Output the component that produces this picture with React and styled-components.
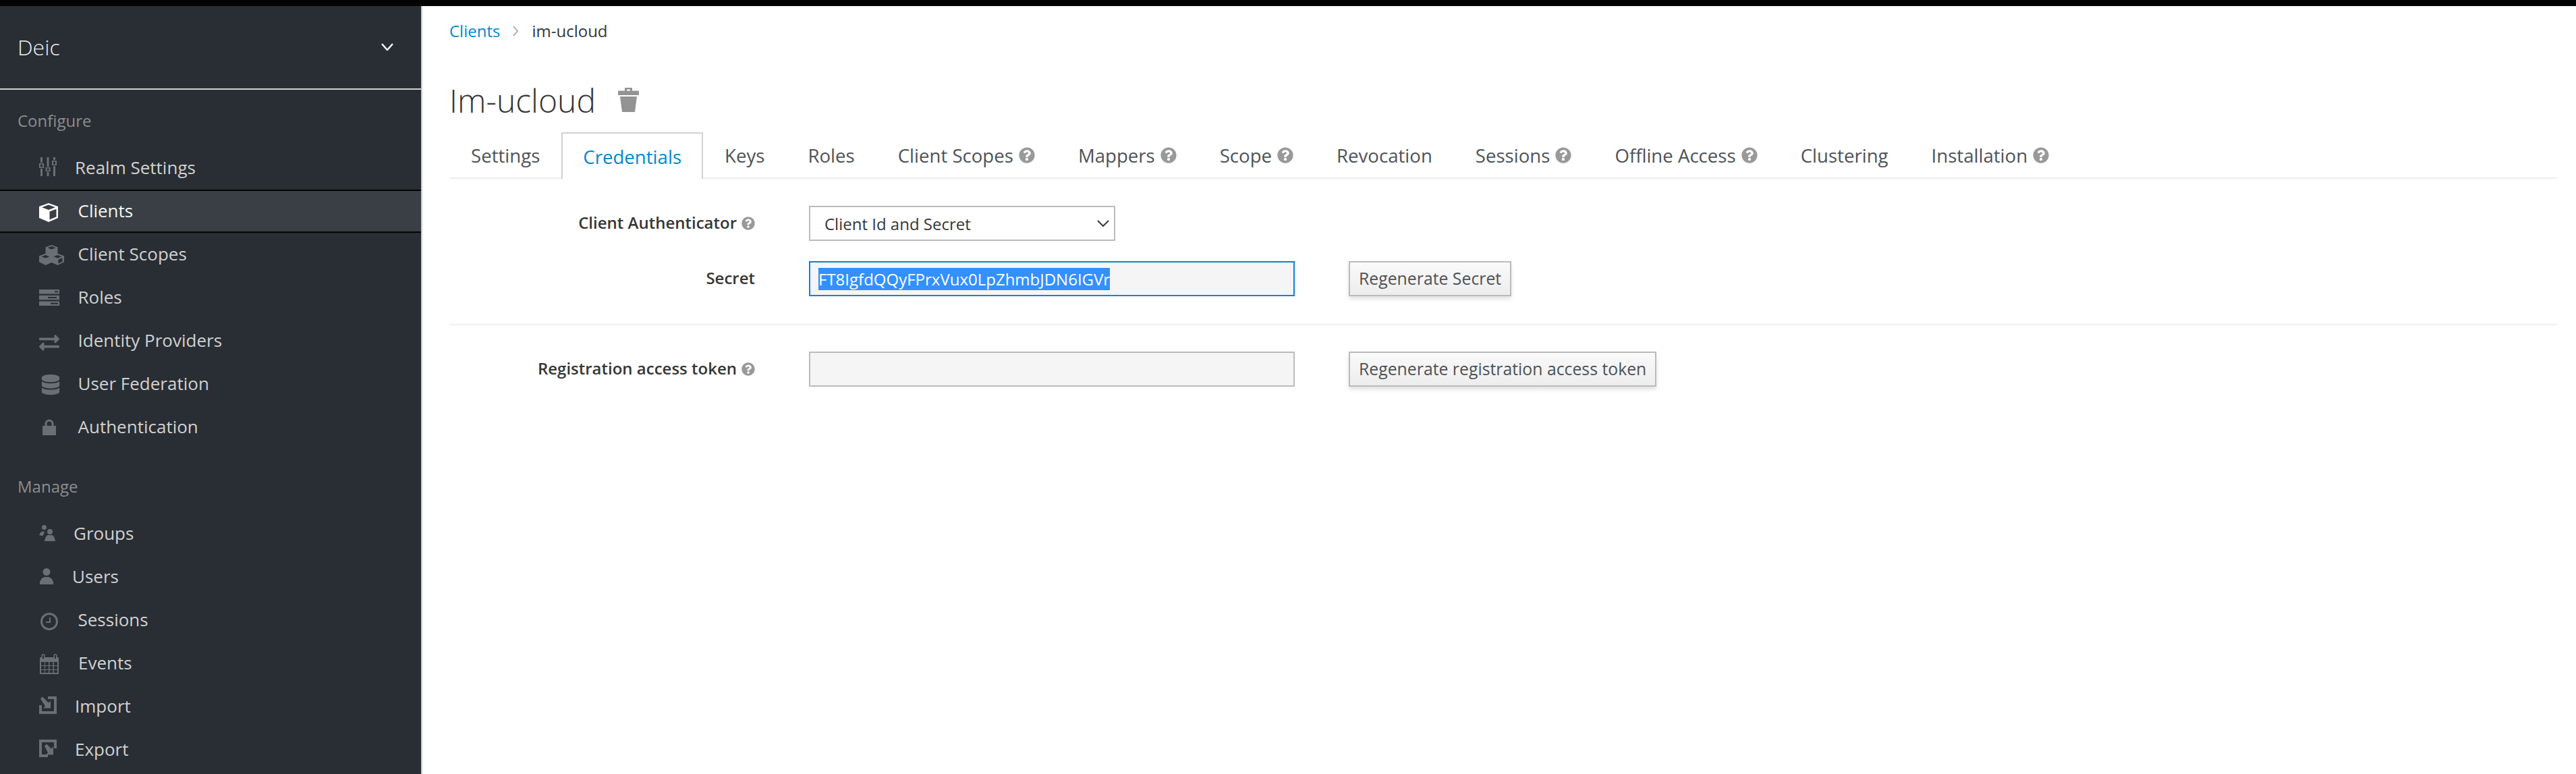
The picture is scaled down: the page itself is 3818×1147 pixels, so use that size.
import React from 'react';
import styled, { createGlobalStyle } from 'styled-components';
import { FaQuestionCircle, FaDatabase, FaExchangeAlt } from 'react-icons/fa';

const Global = createGlobalStyle`
  html, body { margin: 0; padding: 0; background: #fff; }
  body { font-family: "Open Sans", "Liberation Sans", sans-serif; overflow: hidden; }
  * { box-sizing: border-box; }
`;

const Page = styled.div`
  width: 3818px; height: 1147px; display: flex; flex-direction: column; overflow: hidden;
`;
const TopBar = styled.div`height: 9px; flex: none; background: #030303;`;
const Body = styled.div`flex: 1; display: flex; min-height: 0;`;
const Sidebar = styled.nav`
  width: 626px; flex: none; background: #292e34; border-right: 2px solid #c9cacb; color: #d1d1d1;
`;
const RealmHeader = styled.div`
  height: 124px; display: flex; align-items: center; justify-content: space-between;
  padding: 0 41px 2px 26px; border-bottom: 2px solid #d1d1d1; color: #f0f0f0;
  font-size: 32px; font-weight: 300;
`;
const SectionLabel = styled.div`
  height: ${p => p.$h}px; padding-top: ${p => p.$pt}px; padding-left: 26px;
  display: flex; align-items: center; font-size: 24px; color: #8b8d8f;
`;
const NavRow = styled.div`
  height: 64px; display: flex; align-items: center; padding: 0 0 3px 58px; font-size: 26px;
  color: ${p => (p.$active ? '#f5f5f5' : '#d1d1d1')};
  background: ${p => (p.$active ? '#393f44' : 'transparent')};
  ${p => p.$active && 'border-top: 2px solid #030303; border-bottom: 2px solid #030303;'}
`;
const IconSlot = styled.span`
  width: ${p => p.$w}px; flex: none; display: flex; align-items: center;
  padding-left: ${p => p.$pl || 0}px;
  margin-top: ${p => 2 * (p.$dy + 1.5)}px;
  color: ${p => (p.$active ? '#fff' : '#6a6e75')};
`;
const Main = styled.main`flex: 1; min-width: 0; padding: 0 28px 0 40px;`;
const Breadcrumb = styled.div`
  height: 74px; padding-bottom: 1px; display: flex; align-items: center; font-size: 24px; color: #363636;
`;
const Crumb = styled.a`color: #0088ce; text-decoration: none;`;
const CrumbSep = styled.span`
  display: flex; margin: 0 19px 0 19px; color: #9c9c9c;
`;
const TitleRow = styled.div`
  height: 113px; padding-top: 17px; display: flex; align-items: center; gap: 33px;
`;
const Title = styled.h1`margin: 0; font-size: 48px; font-weight: 300; color: #363636;`;
const TrashWrap = styled.span`display: flex; color: #939393;`;
const Tabs = styled.div`display: flex; height: 69px; border-bottom: 2px solid #ededed;`;
const Tab = styled.div`
  height: ${p => (p.$active ? '69px' : '67px')}; padding: 0 ${p => (p.$active ? 30 : 32)}px;
  display: flex; align-items: center; gap: 8px; font-size: 27.600px; background: #fff;
  color: ${p => (p.$active ? '#0088ce' : '#4d5258')};
  ${p => p.$active && 'border: 2px solid #d1d1d1; border-bottom: none;'}
`;
const Help = styled(FaQuestionCircle)`
  flex: none; color: #999; width: ${p => p.$s}px; height: ${p => p.$s}px;
  margin-top: ${p => p.$mt || 0}px;
`;
const Form = styled.div`padding-top: 40px;`;
const FormRow = styled.div`
  display: flex; align-items: center; height: 52px; margin-bottom: ${p => p.$mb}px;
`;
const Label = styled.label`
  width: 453px; flex: none; margin-right: 80px; padding-bottom: 3px; display: flex; justify-content: flex-end;
  align-items: center; gap: 7px; font-size: 24px; font-weight: 600; color: #363636;
`;
const Control = styled.div`
  height: 52px; display: flex; align-items: center; font-size: 24px; color: #363636;
  width: ${p => p.$w}px; flex: none;
  background: ${p => p.$bg}; border: 2px solid ${p => p.$border};
`;
const SelectBox = styled(Control)`
  justify-content: space-between; padding: 0 7px 0 21px;
`;
const InputBox = styled(Control)`padding-left: 12px;`;
const Selected = styled.span`background: #3390ff; color: #fff; line-height: 33px;`;
const Button = styled.button`
  height: 52px; padding: 0 13px 3px; margin-left: 80px; font: inherit; font-size: 24.800px; color: #4d5258;
  border: 2px solid #bbb; background: linear-gradient(#fafafa, #ededed);
  box-shadow: 0 4px 6px rgba(0,0,0,.12);
`;
const Divider = styled.hr`margin: 0 0 39px; border: 0; height: 2px; background: #f1f1f1;`;

const Svg = ({ w, h, children }) => (
  <svg width={w} height={h} viewBox={`0 0 ${w} ${h}`} fill="currentColor">{children}</svg>
);
const Sliders = () => (
  <Svg w={26} h={28}>
    <path d="M2 0h3v8h-3zM2 17h3v11h-3zM0 9h7v7H0zM11.500 0h3v14h-3zM11.500 22h3v6h-3zM9.500 15h7v6h-7zM21 0h3v4h-3zM21 13h3v15h-3zM19 5h7v7h-7z" fillRule="evenodd" />
    <path d="M2 10.500h3v4h-3zM11.500 16.500h3v3h-3zM21 6.500h3v4h-3z" fill="#292e34" />
  </Svg>
);
const Cube = () => (
  <Svg w={28} h={28}>
    <path fillRule="evenodd" d="M14 0l14 5v17l-14 6-14-6V5zM14 2.600L4 6.200l10 3.800 10-3.800zM15.500 12.600v12l10-4.300V8.800z" />
  </Svg>
);
const Cubes = () => (
  <Svg w={37} h={30}>
    <path fillRule="evenodd" d="M18.500 0l9 3.300v9.500l9.500 3.500v9l-9.500 4.700-9-4-9 4L0 25.300v-9l9.500-3.500V3.300zM18.500 2l-6 2.200 6 2.300 6-2.300zM9.500 15l-6 2.200 6 2.300 6-2.300zM27.500 15l-6 2.200 6 2.300 6-2.300zM28.500 21.500v6l6-3v-5.300z" />
  </Svg>
);
const Server = () => (
  <Svg w={30} h={24}>
    <path fillRule="evenodd" d="M0 0h30v6.500H0zM23 2.200v2h5v-2zM0 8.800h30v6.500H0zM13 11v2h13v-2zM0 17.500h30V24H0zM17 19.700v2h11v-2z" />
  </Svg>
);
const Lock = () => (
  <Svg w={20} h={24}>
    <path fillRule="evenodd" d="M3.500 10V7a6.500 6.500 0 0 1 13 0v3H19a1 1 0 0 1 1 1v12a1 1 0 0 1-1 1H1a1 1 0 0 1-1-1V11a1 1 0 0 1 1-1zM6.500 10h7V7a3.500 3.500 0 0 0-7 0z" />
  </Svg>
);
const People = () => (
  <Svg w={25} h={24}>
    <circle cx="7.500" cy="3.500" r="3.500" />
    <circle cx="16" cy="10" r="4" />
    <path d="M0 15l2-4 4-2 2 2-1 2-2 3-1 0zM8 24l1.500-6 3-3h7l3 3 1.500 6z" />
  </Svg>
);
const Person = () => (
  <Svg w={20} h={24}>
    <circle cx="10" cy="5.500" r="5.500" />
    <path d="M0 24v-4l3-5 4-2h6l4 2 3 5v4z" />
  </Svg>
);
const Clock = () => (
  <Svg w={26} h={26}>
    <path fillRule="evenodd" d="M13 0a13 13 0 1 1 0 26a13 13 0 0 1 0-26zM13 3a10 10 0 1 0 0 20a10 10 0 0 0 0-20z" />
    <path d="M13 7h2v8H8v-2h5z" />
  </Svg>
);
const Calendar = () => (
  <Svg w={28} h={30}>
    <path fillRule="evenodd" d="M5 0a2.500 2.500 0 0 1 2.500 2.500V5h13V2.500a2.500 2.500 0 0 1 5 0V5H27a1 1 0 0 1 1 1v23a1 1 0 0 1-1 1H1a1 1 0 0 1-1-1V6a1 1 0 0 1 1-1h1.500V2.500A2.500 2.500 0 0 1 5 0zM5 1.500a1 1 0 0 0-1 1V7h2V2.500a1 1 0 0 0-1-1zM23 1.500a1 1 0 0 0-1 1V7h2V2.500a1 1 0 0 0-1-1zM2 12v5h5v-5zM8 12v5h5v-5zM14.500 12v5h5v-5zM21 12v5h5v-5zM2 18v5h5v-5zM8 18v5h5v-5zM14.500 18v5h5v-5zM21 18v5h5v-5zM2 24v4h5v-4zM8 24v4h5v-4zM14.500 24v4h5v-4zM21 24v4h5v-4z" />
  </Svg>
);
const Import = () => (
  <Svg w={26} h={26}>
    <path d="M13 0h13v26H0V13h4v9h18V4h-9z" />
    <path d="M2 3.500L5 .5l9 9 3-3v11H6l3-3z" />
  </Svg>
);
const Export = () => (
  <Svg w={26} h={26}>
    <path d="M0 0h26v13h-4V4H4v18h9v4H0z" />
    <path d="M8 9.500L11 6.500l7 7 3-3v12H10l3-3z" />
  </Svg>
);
const Trash = () => (
  <Svg w={31} h={36}>
    <path fillRule="evenodd" d="M10 0h11v4.500h10V11H0V4.500h10zM13 2.500V4.500h5V2.500z" />
    <path d="M3 13h25l-3 23H6z" />
  </Svg>
);
const Chevron = ({ w, h, color, sw }) => (
  <svg width={w} height={h} viewBox={`0 0 ${w} ${h}`} fill="none" stroke={color} strokeWidth={sw}>
    <path d={`M1 1L${w / 2} ${h - 1}L${w - 1} 1`} />
  </svg>
);
const Exchange = () => <FaExchangeAlt size={30} />;
const Database = () => <FaDatabase size={30} />;

const configure = [
  { label: 'Realm Settings', Icon: Sliders, w: 53, dy: -2.5 },
  { label: 'Clients', Icon: Cube, w: 57.5, dy: 2, active: true },
  { label: 'Client Scopes', Icon: Cubes, w: 57.5, dy: 1 },
  { label: 'Roles', Icon: Server, w: 57.5, dy: 0 },
  { label: 'Identity Providers', Icon: Exchange, w: 57.5, dy: 3 },
  { label: 'User Federation', Icon: Database, w: 57.5, dy: 1, pl: 2 },
  { label: 'Authentication', Icon: Lock, w: 57.5, dy: 0, pl: 5 },
];
const manage = [
  { label: 'Groups', Icon: People, w: 51, dy: -1 },
  { label: 'Users', Icon: Person, w: 49, dy: -1, pl: 1 },
  { label: 'Sessions', Icon: Clock, w: 57.5, dy: 1.5, pl: 2 },
  { label: 'Events', Icon: Calendar, w: 58, dy: 1, pl: 1 },
  { label: 'Import', Icon: Import, w: 53, dy: -2 },
  { label: 'Export', Icon: Export, w: 53, dy: -2 },
];
const tabs = [
  ['Settings'], ['Credentials', false, true], ['Keys'], ['Roles'], ['Client Scopes', true], ['Mappers', true],
  ['Scope', true], ['Revocation'], ['Sessions', true], ['Offline Access', true], ['Clustering'], ['Installation', true],
];

const Item = ({ item }) => {
  const { label, Icon, w, dy, pl, active } = item;
  return (
    <NavRow $active={active}>
      <IconSlot $w={w} $dy={dy} $pl={pl} $active={active}><Icon /></IconSlot>
      {label}
    </NavRow>
  );
};

export default function App() {
  return (
    <Page>
      <Global />
      <TopBar />
      <Body>
        <Sidebar>
          <RealmHeader>Deic<Chevron w={18} h={11} color="#f5f5f5" sw={2.500} /></RealmHeader>
          <SectionLabel $h={84} $pt={6}>Configure</SectionLabel>
          {configure.map(i => <Item key={i.label} item={i} />)}
          <SectionLabel $h={94} $pt={16}>Manage</SectionLabel>
          {manage.map(i => <Item key={i.label} item={i} />)}
        </Sidebar>
        <Main>
          <Breadcrumb>
            <Crumb>Clients</Crumb>
            <CrumbSep><svg width="9" height="16" viewBox="0 0 9 16" fill="none" stroke="currentColor" strokeWidth="1.500"><path d="M1 1l6 7-6 7" /></svg></CrumbSep>
            im-ucloud
          </Breadcrumb>
          <TitleRow>
            <Title>Im-ucloud</Title>
            <TrashWrap><Trash /></TrashWrap>
          </TitleRow>
          <Tabs>
            {tabs.map(([t, h, a]) => (
              <Tab key={t} $active={a}>{t}{h && <Help $s={24} />}</Tab>
            ))}
          </Tabs>
          <Form>
            <FormRow $mb={30}>
              <Label>Client Authenticator <Help $s={20} $mt={3} /></Label>
              <SelectBox $w={454} $bg="#fff" $border="#bbb">
                Client Id and Secret
                <Chevron w={18} h={10} color="#363636" sw={2} />
              </SelectBox>
            </FormRow>
            <FormRow $mb={41}>
              <Label>Secret</Label>
              <InputBox $w={720} $bg="#f5f5f5" $border="#0088ce">
                <Selected>FT8IgfdQQyFPrxVux0LpZhmbJDN6IGVr</Selected>
              </InputBox>
              <Button>Regenerate Secret</Button>
            </FormRow>
            <Divider />
            <FormRow $mb={0}>
              <Label>Registration access token <Help $s={20} $mt={3} /></Label>
              <InputBox $w={720} $bg="#f5f5f5" $border="#bbb" />
              <Button>Regenerate registration access token</Button>
            </FormRow>
          </Form>
        </Main>
      </Body>
    </Page>
  );
}
